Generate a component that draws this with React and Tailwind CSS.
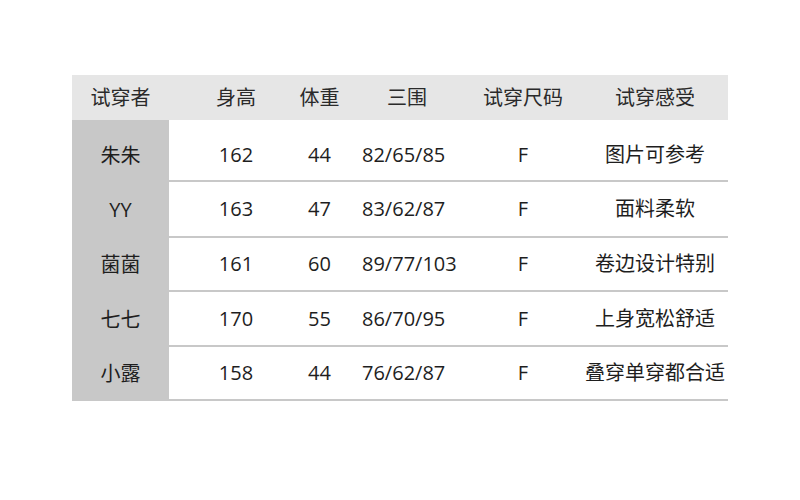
import React from "react";

const cols = "grid grid-cols-[108px_85px_103px_124px_139px]";

const rows = [
  { name: "朱朱", h: "162", w: "44", size: "82/65/85", fit: "F", note: "图片可参考", cls: "h-[62px] pt-[10px]" },
  { name: "YY", h: "163", w: "47", size: "83/62/87", fit: "F", note: "面料柔软", cls: "h-[56px]" },
  { name: "菌菌", h: "161", w: "60", size: "89/77/103", fit: "F", note: "卷边设计特别", cls: "h-[54px]" },
  { name: "七七", h: "170", w: "55", size: "86/70/95", fit: "F", note: "上身宽松舒适", cls: "h-[55px]" },
  { name: "小露", h: "158", w: "44", size: "76/62/87", fit: "F", note: "叠穿单穿都合适", cls: "h-[54px]" },
];

const Cell = ({ children, className = "" }) => (
  <div className={`flex items-center justify-center whitespace-nowrap ${className}`}>
    {children}
  </div>
);

export default function App() {
  return (
    <div
      className="w-[800px] h-[500px] bg-white pt-[75px] pl-[72px] text-[20px] text-[#1e1e1e]"
      style={{ fontFamily: '"Open Sans", "Noto Sans CJK SC", sans-serif' }}
    >
      <div className="w-[656px]">
        {/* Header */}
        <div className="flex h-[45px] bg-[#e6e6e6] text-[#2a2a2a]">
          <Cell className="w-[97px]">试穿者</Cell>
          <div className={`${cols} flex-1`}>
            <Cell className="pl-[26px]">身高</Cell>
            <Cell>体重</Cell>
            <Cell className="pr-[13px]">三围</Cell>
            <Cell className="pr-[8px]">试穿尺码</Cell>
            <Cell className="pr-[7px]">试穿感受</Cell>
          </div>
        </div>

        {/* Body */}
        <div className="flex">
          <div className="w-[97px] bg-[#c8c8c8]">
            {rows.map((r) => (
              <div key={r.name} className={`flex items-center justify-center ${r.cls}`}>
                {r.name}
              </div>
            ))}
          </div>
          <div className="flex-1">
            {rows.map((r) => (
              <div key={r.name} className={`${cols} border-b-2 border-[#c8c8c8] ${r.cls}`}>
                <Cell className="pl-[26px]">{r.h}</Cell>
                <Cell>{r.w}</Cell>
                <div className="flex items-center whitespace-nowrap">{r.size}</div>
                <Cell className="pr-[8px]">{r.fit}</Cell>
                <Cell className="pr-[7px]">{r.note}</Cell>
              </div>
            ))}
          </div>
        </div>
      </div>
    </div>
  );
}
